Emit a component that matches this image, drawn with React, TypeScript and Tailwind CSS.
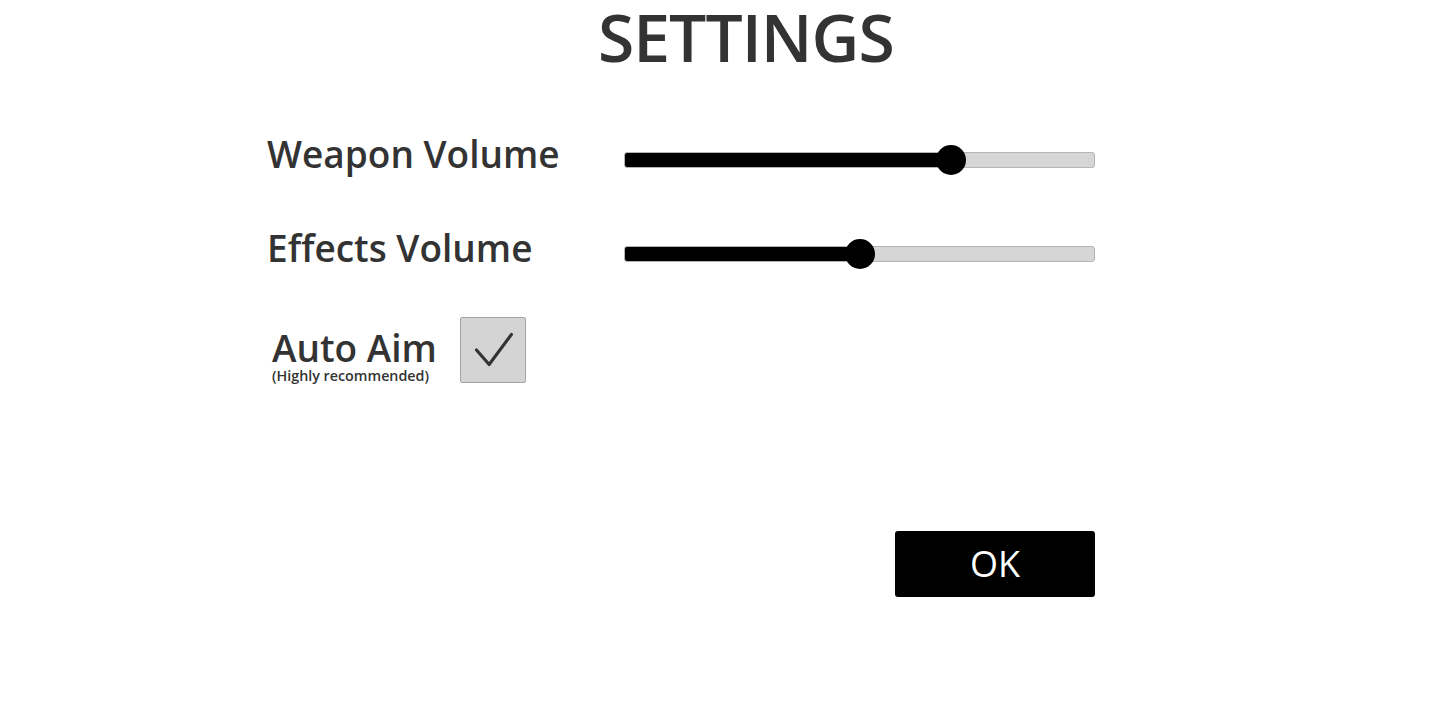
function VolumeSlider({ value }: { value: number }) {
  return (
    <div className="relative w-[471px] h-[30px] flex items-center">
      <div className="w-full h-[16px] rounded-[3px] bg-[#d6d6d6] border border-[#b5b5b5] overflow-hidden">
        <div className="h-full bg-black" style={{ width: `${value}%` }} />
      </div>
      <div
        className="absolute top-0 w-[30px] h-[30px] -ml-[15px] rounded-full bg-black"
        style={{ left: `${value}%` }}
      />
    </div>
  )
}

export default function App() {
  return (
    <div className="w-[1433px] h-[713px] bg-white text-[#333333] font-['Open_Sans',sans-serif]">
      <h1 className="pl-[598px] text-[66px] leading-[73px] font-semibold tracking-[-1px]">SETTINGS</h1>

      <div className="ml-[267px] w-[828px] mt-[72px] flex flex-col">
        <div className="flex items-center h-[30px]">
          <span className="w-[357px] text-[37px] font-semibold leading-none mb-[14px]">Weapon Volume</span>
          <VolumeSlider value={69.4} />
        </div>

        <div className="flex items-center h-[30px] mt-[64px]">
          <span className="w-[357px] text-[37px] font-semibold leading-none mb-[14px]">Effects Volume</span>
          <VolumeSlider value={50.1} />
        </div>

        <div className="flex items-start mt-[48px]">
          <div className="flex flex-col pl-[5px] w-[193px] pt-[12px]">
            <span className="text-[37px] font-semibold leading-[38px]">Auto Aim</span>
            <span className="text-[14.3px] font-semibold leading-[16px] mt-[1px]">(Highly recommended)</span>
          </div>
          <div className="w-[66px] h-[66px] bg-[#d4d4d4] border border-[#a3a3a3] rounded-[2px]">
            <svg viewBox="0 0 66 66" className="w-full h-full" fill="none">
              <path d="M16 33 L29 48 L52 17" stroke="#333333" strokeWidth="3.2" strokeLinecap="round" strokeLinejoin="round" />
            </svg>
          </div>
        </div>

        <div className="flex justify-end mt-[147px]">
          <button className="w-[200px] h-[66px] bg-black rounded-[3px] text-white text-[36px] font-medium flex items-center justify-center">
            OK
          </button>
        </div>
      </div>
    </div>
  )
}
